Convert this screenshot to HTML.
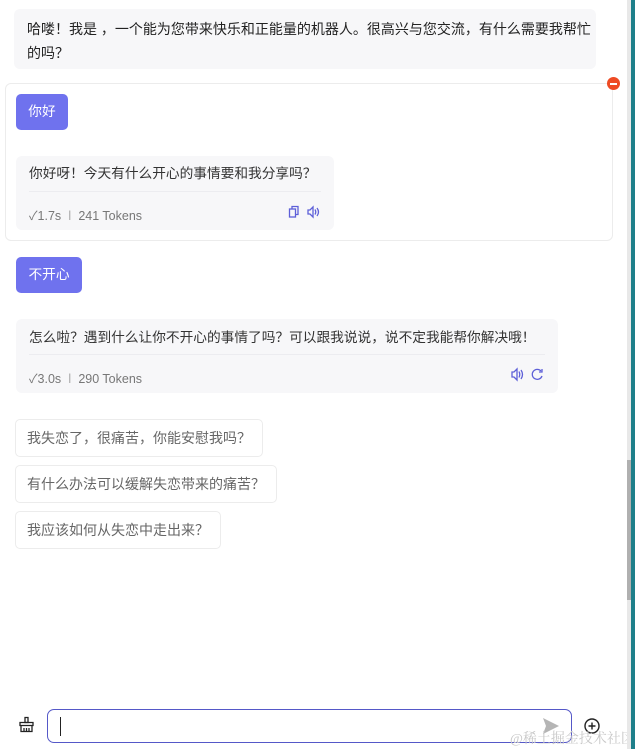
<!DOCTYPE html>
<html><head><meta charset="utf-8"><style>
*{box-sizing:border-box;margin:0;padding:0}
body{width:635px;height:749px;overflow:hidden;background:#fff;font-family:"Liberation Sans","Noto Sans CJK SC",sans-serif;font-size:13.7px;color:#222;position:relative}
.abs{position:absolute}
.bot{background:#f7f7f9;border-radius:6px}
.user{background:#6f72ee;color:#fff;border-radius:5px;font-size:13.7px;line-height:36px;text-align:center}
.meta{color:#777;font-size:12.5px}
.sug{border:1px solid #ececec;border-radius:5px;color:#666;font-size:14px;line-height:36px;padding:0 11px;background:#fff}
</style></head><body>
<div class="abs bot" style="left:14px;top:9px;width:582px;height:60px;padding:8px 2px 8px 13px;line-height:24px;font-size:14px">哈喽！我是 ，一个能为您带来快乐和正能量的机器人。很高兴与您交流，有什么需要我帮忙的吗？</div>
<div class="abs" style="left:5px;top:83px;width:608px;height:158px;border:1px solid #ececec;border-radius:6px"></div>
<div class="abs" style="left:607px;top:77px;width:13px;height:13px;border-radius:50%;background:#ee4b24"><div style="position:absolute;left:3px;top:5.5px;width:7px;height:2px;background:#fff"></div></div>
<div class="abs user" style="left:16px;top:94px;width:52px">你好</div>
<div class="abs bot" style="left:16px;top:156px;width:318px;height:74px"></div>
<div class="abs" style="left:29px;top:163px;line-height:22px;color:#333">你好呀！今天有什么开心的事情要和我分享吗？</div>
<div class="abs" style="left:29px;top:191px;width:292px;height:1px;background:#ececf0"></div>
<div class="abs meta" style="left:29px;top:205px">✓1.7s&nbsp; <span style="color:#aaa">ǀ</span>&nbsp; 241 Tokens</div>
<svg class="abs" style="left:288px;top:205px" width="34" height="14" viewBox="0 0 34 14" fill="none" stroke="#5d5fd8" stroke-width="1.3"><rect x="1.5" y="4" width="6" height="8"/><path d="M4 4V1.5h6V9.5H7.5"/><path d="M20 5h2l3-3v10l-3-3h-2z"/><path d="M27 4.5q1.5 2.5 0 5M29 3q3 4 0 8"/></svg>
<div class="abs user" style="left:16px;top:257px;width:66px">不开心</div>
<div class="abs bot" style="left:16px;top:319px;width:542px;height:74px"></div>
<div class="abs" style="left:29px;top:327px;line-height:22px;color:#333">怎么啦？遇到什么让你不开心的事情了吗？可以跟我说说，说不定我能帮你解决哦！</div>
<div class="abs" style="left:29px;top:354px;width:516px;height:1px;background:#ececf0"></div>
<div class="abs meta" style="left:29px;top:368px">✓3.0s&nbsp; <span style="color:#aaa">ǀ</span>&nbsp; 290 Tokens</div>
<svg class="abs" style="left:510px;top:367px" width="36" height="15" viewBox="0 0 36 15" fill="none" stroke="#5d5fd8" stroke-width="1.3"><path d="M2 5h2l3-3v11l-3-3H2z"/><path d="M9 4.5q1.5 3 0 6M11 3q3 4.5 0 9"/><path d="M31 4a5 5 0 1 0 1 5"/><path d="M32 2v3h-3" /></svg>
<div class="abs sug" style="left:15px;top:419px">我失恋了，很痛苦，你能安慰我吗？</div>
<div class="abs sug" style="left:15px;top:465px">有什么办法可以缓解失恋带来的痛苦？</div>
<div class="abs sug" style="left:15px;top:511px">我应该如何从失恋中走出来？</div>
<svg class="abs" style="left:18px;top:716px" width="17" height="17" viewBox="0 0 17 17" fill="none" stroke="#222" stroke-width="1.3"><path d="M7 1.5h3v5H7z"/><path d="M2 6.5h13v3H2z"/><path d="M3 9.5v6h11v-6M6 12v3.5M8.5 12v3.5M11 12v3.5"/></svg>
<div class="abs" style="left:47px;top:709px;width:525px;height:34px;border:1px solid #5558c8;border-radius:7px"></div>
<div class="abs" style="left:60px;top:717px;width:1px;height:19px;background:#222"></div>
<svg class="abs" style="left:542px;top:717px" width="18" height="18" viewBox="0 0 18 18"><path d="M1 1l16 8-16 8 3-8z" fill="#b5b5b5"/></svg>
<svg class="abs" style="left:583px;top:717px" width="18" height="18" viewBox="0 0 18 18" fill="none" stroke="#222" stroke-width="1.4"><circle cx="9" cy="9" r="7"/><path d="M9 5.5v7M5.5 9h7"/></svg>
<div class="abs" style="left:510px;top:728px;color:#c8c8c8;font-family:'Liberation Serif','Noto Serif CJK SC',serif;font-size:14px">@稀土掘金技术社区</div>
<div class="abs" style="left:627px;top:0;width:4px;height:749px;background:#e8e8e8"></div>
<div class="abs" style="left:627px;top:460px;width:4px;height:140px;background:#b0b0b0"></div>
<div class="abs" style="left:631px;top:0;width:4px;height:749px;background:#1e7f8a"></div>
</body></html>
